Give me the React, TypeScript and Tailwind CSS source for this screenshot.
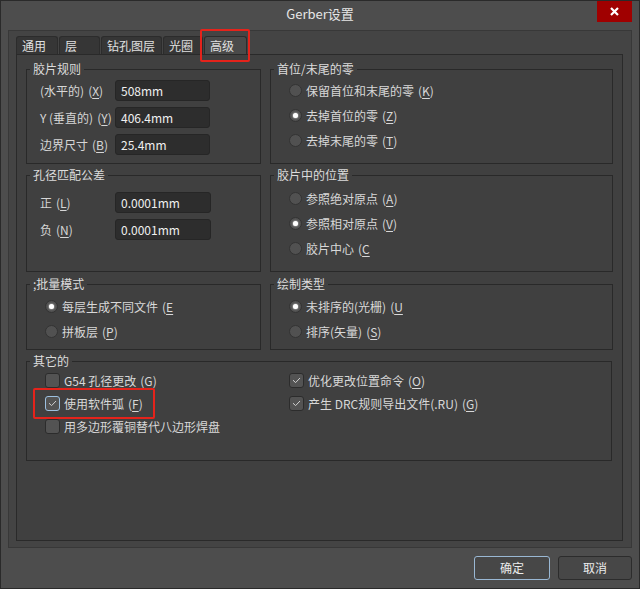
import React from 'react';

const font = "font-['Noto_Sans_CJK_SC','Noto_Sans',sans-serif]";

const Key: React.FC<{ k: string; close?: boolean }> = ({ k, close = true }) => (
  <span className="ml-[4px]">
    (<span className="underline underline-offset-2">{k}</span>
    {close ? ')' : ''}
  </span>
);

const Group: React.FC<{ title: string; className?: string; children?: React.ReactNode }> = ({
  title,
  className = '',
  children,
}) => (
  <div className={`relative border border-[#292929] ${className}`}>
    <span className="absolute -top-[9px] left-[3px] px-[3px] bg-[#404040] leading-[16px] text-[#dcdcdc]">
      {title}
    </span>
    {children}
  </div>
);

const Field: React.FC<{ label: React.ReactNode; value: string; w: string }> = ({ label, value, w }) => (
  <div className="flex items-center h-[21px]">
    <div className="w-[75px] text-[#d6d6d6]">{label}</div>
    <div
      className={`${w} h-[21px] rounded-[3px] bg-[#2d2d2d] border border-[#262626] pl-[5px] flex items-center text-[#f0f0f0]`}
    >
      {value}
    </div>
  </div>
);

const Radio: React.FC<{ checked?: boolean; children: React.ReactNode }> = ({ checked, children }) => (
  <div className="flex items-center h-[25px] gap-[4px]">
    <div className="w-[13px] h-[13px] rounded-full bg-[#515151] border border-[#333] flex items-center justify-center">
      {checked && <div className="w-[5px] h-[5px] rounded-full bg-white shadow-[0_0_2px_#fff]" />}
    </div>
    <span className="text-[#d8d8d8]">{children}</span>
  </div>
);

const Check: React.FC<{ checked?: boolean; focus?: boolean; children: React.ReactNode }> = ({
  checked,
  focus,
  children,
}) => (
  <div className="flex items-center h-[23px] gap-[4px]">
    <div
      className={`w-[15px] h-[15px] rounded-[3px] bg-[#535353] border flex items-center justify-center ${
        focus ? 'border-[#9cc0e0]' : 'border-[#2c2c2c]'
      }`}
    >
      {checked && (
        <svg width="9" height="7" viewBox="0 0 9 7" fill="none">
          <path d="M1 3.2 L3.6 5.6 L8 1" stroke="#d0d0d0" strokeWidth="1" />
        </svg>
      )}
    </div>
    <span className="text-[#d8d8d8]">{children}</span>
  </div>
);

const tabs = [
  { name: '通用', w: 'w-[42px]' },
  { name: '层', w: 'w-[41px]' },
  { name: '钻孔图层', w: 'w-[61px]' },
  { name: '光圈', w: 'w-[40px]' },
  { name: '高级', w: 'w-[43px]', active: true },
];

export default function App() {
  return (
    <div
      className={`relative w-[640px] h-[589px] bg-[#4d4d4d] border border-[#2a2a2a] flex flex-col text-[12px] ${font}`}
    >
      {/* title bar */}
      <div className="relative h-[29px] pb-[3px] flex items-center justify-center text-[13px] text-[#e6e6e6]">
        Gerber设置
        <div className="absolute right-[7px] top-0 w-[35px] h-[21px] bg-[#a00000] flex items-center justify-center">
          <svg width="9" height="9" viewBox="0 0 9 9">
            <path d="M1 1 L8 8 M8 1 L1 8" stroke="#fff" strokeWidth="2.2" />
          </svg>
        </div>
      </div>

      {/* tab frame */}
      <div className="mx-[7px] h-[518px] bg-[#444444] border border-[#383838] pt-[5px] pl-[7px] pr-[8px] pb-[6px] flex flex-col">
        <div className="flex h-[18px] gap-[1px]">
          {tabs.map((t) => (
            <div
              key={t.name}
              className={`${t.w} h-[18px] rounded-t-[3px] border border-b-0 border-[#2c2c2c] pl-[5px] flex items-center leading-none text-[#e0e0e0] ${
                t.active ? 'bg-[#4a4a4a]' : 'bg-[#363636]'
              }`}
            >
              {t.name}
            </div>
          ))}
        </div>

        <div className="flex-1 bg-[#404040] border border-[#2a2a2a] pt-[14px] pl-[9px] pr-[10px] flex flex-col">
          {/* row 1 */}
          <div className="grid grid-cols-[235px_343px] gap-x-[9px]">
            <Group title="胶片规则" className="h-[95px]">
              <div className="pt-[10px] pl-[13px] flex flex-col gap-[6px]">
                <Field label={<>(水平的)<Key k="X" /></>} value="508mm" w="w-[95px]" />
                <Field label={<>Y (垂直的)<Key k="Y" /></>} value="406.4mm" w="w-[95px]" />
                <Field label={<>边界尺寸<Key k="B" /></>} value="25.4mm" w="w-[95px]" />
              </div>
            </Group>
            <Group title="首位/末尾的零" className="h-[95px]">
              <div className="pt-[8px] pl-[18px] flex flex-col">
                <Radio>保留首位和末尾的零<Key k="K" /></Radio>
                <Radio checked>去掉首位的零<Key k="Z" /></Radio>
                <Radio>去掉末尾的零<Key k="T" /></Radio>
              </div>
            </Group>
          </div>

          {/* row 2 */}
          <div className="mt-[11px] grid grid-cols-[235px_343px] gap-x-[9px]">
            <Group title="孔径匹配公差" className="h-[97px]">
              <div className="pt-[16px] pl-[13px] flex flex-col gap-[6px]">
                <Field label={<>正<Key k="L" /></>} value="0.0001mm" w="w-[96px]" />
                <Field label={<>负<Key k="N" /></>} value="0.0001mm" w="w-[96px]" />
              </div>
            </Group>
            <Group title="胶片中的位置" className="h-[97px]">
              <div className="pt-[10px] pl-[18px] flex flex-col">
                <Radio>参照绝对原点<Key k="A" /></Radio>
                <Radio checked>参照相对原点<Key k="V" /></Radio>
                <Radio>胶片中心<Key k="C" close={false} /></Radio>
              </div>
            </Group>
          </div>

          {/* row 3 */}
          <div className="mt-[12px] grid grid-cols-[235px_343px] gap-x-[9px]">
            <Group title=";批量模式" className="h-[66px]">
              <div className="pt-[9px] pl-[18px] flex flex-col">
                <Radio checked>每层生成不同文件<Key k="E" close={false} /></Radio>
                <Radio>拼板层<Key k="P" /></Radio>
              </div>
            </Group>
            <Group title="绘制类型" className="h-[66px]">
              <div className="pt-[9px] pl-[18px] flex flex-col">
                <Radio checked>未排序的(光栅)<Key k="U" close={false} /></Radio>
                <Radio>排序(矢量)<Key k="S" /></Radio>
              </div>
            </Group>
          </div>

          {/* row 4 */}
          <Group title="其它的" className="mt-[11px] h-[100px]">
            <div className="pt-[7px] pl-[18px] grid grid-cols-[244px_1fr]">
              <div className="flex flex-col">
                <Check>G54 孔径更改<Key k="G" /></Check>
                <Check checked focus>使用软件弧<Key k="F" /></Check>
                <Check>用多边形覆铜替代八边形焊盘</Check>
              </div>
              <div className="flex flex-col">
                <Check checked>优化更改位置命令<Key k="O" /></Check>
                <Check checked>产生 DRC规则导出文件(.RU)<Key k="G" /></Check>
              </div>
            </div>
          </Group>
        </div>
      </div>

      {/* buttons */}
      <div className="flex-1 flex items-center justify-end gap-[8px] pr-[7px]">
        <div className="w-[76px] h-[24px] rounded-[3px] bg-[#474747] border border-[#9ab8d4] flex items-center justify-center text-[#ececec]">
          确定
        </div>
        <div className="w-[74px] h-[24px] rounded-[3px] bg-[#474747] border border-[#2c2c2c] flex items-center justify-center text-[#ececec]">
          取消
        </div>
      </div>

      {/* red annotation boxes */}
      <div className="absolute left-[199px] top-[28px] w-[50px] h-[33px] border-2 border-[#e5231b] rounded-[2px]" />
      <div className="absolute left-[32px] top-[387px] w-[122px] h-[31px] border-2 border-[#e5231b] rounded-[2px]" />
    </div>
  );
}
